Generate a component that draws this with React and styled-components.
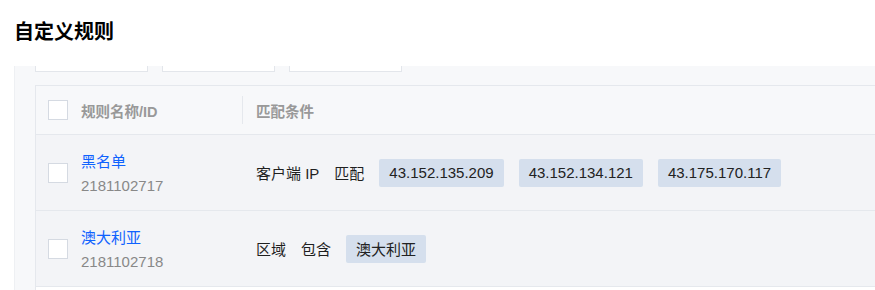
import React from "react";
import styled, { createGlobalStyle } from "styled-components";

const GlobalStyle = createGlobalStyle`
  html, body {
    margin: 0;
    padding: 0;
    background: #fff;
    font-family: "Liberation Sans", "Noto Sans CJK SC", sans-serif;
    color: #1f1f1f;
    overflow: hidden;
  }
`;

const Page = styled.div`
  width: 875px;
  height: 290px;
  overflow: hidden;
`;

const Title = styled.h2`
  margin: 0;
  padding: 18px 14px 0;
  font-size: 20px;
  line-height: 28px;
  font-weight: 700;
  color: #000;
`;

const Panel = styled.section`
  margin: 20px 0 0 14px;
  border-left: 1px solid #eef0f3;
  background: #f7f8fa;
  padding-left: 20px;
  height: 300px;
  overflow: hidden;
`;

const Toolbar = styled.div`
  display: flex;
  gap: 14px;
  margin-top: -26px;
  margin-bottom: 13px;
`;

const Input = styled.div`
  width: 113px;
  height: 32px;
  box-sizing: border-box;
  background: #fff;
  border: 1px solid #e3e6eb;
`;

const Table = styled.div`
  border-top: 1px solid #e5e8ed;
  border-left: 1px solid #e5e8ed;
`;

const Row = styled.div`
  display: flex;
  align-items: center;
  box-sizing: border-box;
  height: ${(p) => (p.$head ? 49 : 76)}px;
  background: ${(p) => (p.$head ? "#f7f8fa" : p.$bg || "#f3f4f7")};
  border-bottom: 1px solid #e5e8ed;
`;

const NameCell = styled.div`
  display: flex;
  align-items: center;
  gap: 13px;
  width: 206px;
  padding-left: 12px;
  box-sizing: border-box;
`;

const Check = styled.span`
  display: inline-block;
  width: 20px;
  height: 20px;
  box-sizing: border-box;
  background: #fff;
  border: 1px solid #d5dae2;
  flex-shrink: 0;
`;

const HeadText = styled.span`
  font-size: 14.5px;
  font-weight: 700;
  color: #999;
`;

const Divider = styled.span`
  width: 1px;
  height: 28px;
  background: ${(p) => (p.$hidden ? "transparent" : "#e5e8ed")};
`;

const CondCell = styled.div`
  display: flex;
  align-items: center;
  gap: 15px;
  padding-left: 13px;
  font-size: 15px;
  color: #1f1f1f;
`;

const NameBlock = styled.div`
  display: flex;
  flex-direction: column;
  margin-top: 3px;
  line-height: 24px;
  font-size: 15px;
`;

const Link = styled.a`
  color: #0f62fe;
  text-decoration: none;
`;

const Id = styled.span`
  color: #888;
`;

const Tag = styled.span`
  display: inline-flex;
  align-items: center;
  height: 28px;
  padding: 0 10px;
  border-radius: 2px;
  background: #d5dfed;
  color: #222;
`;

const rules = [
  {
    name: "黑名单",
    id: "2181102717",
    field: "客户端 IP",
    op: "匹配",
    values: ["43.152.135.209", "43.152.134.121", "43.175.170.117"],
  },
  {
    name: "澳大利亚",
    id: "2181102718",
    field: "区域",
    op: "包含",
    values: ["澳大利亚"],
  },
];

export default function App() {
  return (
    <Page>
      <GlobalStyle />
      <Title>自定义规则</Title>
      <Panel>
        <Toolbar>
          <Input />
          <Input />
          <Input />
        </Toolbar>
        <Table>
          <Row $head>
            <NameCell>
              <Check />
              <HeadText>规则名称/ID</HeadText>
            </NameCell>
            <Divider />
            <CondCell>
              <HeadText>匹配条件</HeadText>
            </CondCell>
          </Row>
          {rules.map((r) => (
            <Row key={r.id}>
              <NameCell>
                <Check />
                <NameBlock>
                  <Link href="#">{r.name}</Link>
                  <Id>{r.id}</Id>
                </NameBlock>
              </NameCell>
              <Divider $hidden />
              <CondCell>
                <span>{r.field}</span>
                <span>{r.op}</span>
                {r.values.map((v) => (
                  <Tag key={v}>{v}</Tag>
                ))}
              </CondCell>
            </Row>
          ))}
          <Row $bg="#fff" />
        </Table>
      </Panel>
    </Page>
  );
}
